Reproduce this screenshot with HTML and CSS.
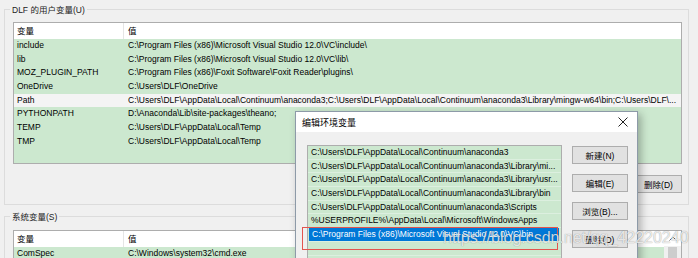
FILE: index.html
```html
<!DOCTYPE html>
<html lang="zh-CN">

<head>
    <meta charset="UTF-8">
    <title>环境变量</title>
    <link rel="stylesheet" href="styles.css">
</head>

<body>
    <div class="env">
        <!-- 用户变量 -->
        <div class="group">
            <div class="group-title">DLF 的用户变量(U)</div>
            <div class="list list-user">
                <div class="list-head">
                    <span>变量</span><span>值</span>
                </div>
                <div class="list-body">
                    <div class="row"><span>include</span><span>C:\Program Files (x86)\Microsoft Visual Studio 12.0\VC\include\</span></div>
                    <div class="row"><span>lib</span><span>C:\Program Files (x86)\Microsoft Visual Studio 12.0\VC\lib\</span></div>
                    <div class="row"><span>MOZ_PLUGIN_PATH</span><span>C:\Program Files (x86)\Foxit Software\Foxit Reader\plugins\</span></div>
                    <div class="row"><span>OneDrive</span><span>C:\Users\DLF\OneDrive</span></div>
                    <div class="row row-current"><span>Path</span><span>C:\Users\DLF\AppData\Local\Continuum\anaconda3;C:\Users\DLF\AppData\Local\Continuum\anaconda3\Library\mingw-w64\bin;C:\Users\DLF\...</span></div>
                    <div class="row"><span>PYTHONPATH</span><span>D:\Anaconda\Lib\site-packages\theano;</span></div>
                    <div class="row"><span>TEMP</span><span>C:\Users\DLF\AppData\Local\Temp</span></div>
                    <div class="row"><span>TMP</span><span>C:\Users\DLF\AppData\Local\Temp</span></div>
                </div>
            </div>
            <!-- 新建/编辑 按钮被对话框遮住 -->
            <div class="actions">
                <button class="btn">删除(D)</button>
            </div>
        </div>

        <!-- 系统变量 -->
        <div class="group group-system">
            <div class="group-title">系统变量(S)</div>
            <div class="list list-system">
                <div class="list-main">
                    <div class="list-head">
                        <span>变量</span><span>值</span>
                    </div>
                    <div class="list-body">
                        <div class="row"><span>ComSpec</span><span>C:\Windows\system32\cmd.exe</span></div>
                    </div>
                </div>
                <div class="scrollbar">
                    <div class="scroll-up">
                        <svg width="8" height="5" viewBox="0 0 8 5"><path d="M0.5 4.5 L4 1 L7.5 4.5" fill="none" stroke="#606060" stroke-width="1"/></svg>
                    </div>
                    <div class="scroll-thumb"></div>
                </div>
            </div>
        </div>

        <!-- 编辑环境变量 对话框 -->
        <div class="dialog">
            <div class="dialog-title">
                <span>编辑环境变量</span>
                <svg class="close" width="10" height="10" viewBox="0 0 10 10"><path d="M0.5 0.5 L9.5 9.5 M9.5 0.5 L0.5 9.5" stroke="#222" stroke-width="1"/></svg>
            </div>
            <div class="dialog-body">
                <div class="path-list">
                    <div class="path-row">C:\Users\DLF\AppData\Local\Continuum\anaconda3</div>
                    <div class="path-row">C:\Users\DLF\AppData\Local\Continuum\anaconda3\Library\mi...</div>
                    <div class="path-row">C:\Users\DLF\AppData\Local\Continuum\anaconda3\Library\usr...</div>
                    <div class="path-row">C:\Users\DLF\AppData\Local\Continuum\anaconda3\Library\bin</div>
                    <div class="path-row">C:\Users\DLF\AppData\Local\Continuum\anaconda3\Scripts</div>
                    <div class="path-row">%USERPROFILE%\AppData\Local\Microsoft\WindowsApps</div>
                    <div class="path-row selected"><span>C:\Program Files (x86)\Microsoft Visual Studio 12.0\VC\bin</span></div>
                    <div class="path-row"></div>
                    <div class="path-row"></div>
                </div>
                <div class="dialog-actions">
                    <button class="btn btn-wide">新建(N)</button>
                    <button class="btn btn-wide">编辑(E)</button>
                    <button class="btn btn-wide">浏览(B)...</button>
                    <button class="btn btn-wide">删除(D)</button>
                </div>
            </div>
        </div>

        <!-- 标注 -->
        <div class="mark"></div>
        <div class="watermark">https://blog.csdn.net/qq_42220240</div>
    </div>
</body>

</html>
```

FILE: styles.css
```css
body {
    margin: 0;
    background-color: #f0f0f0;
    font-family: "Liberation Sans", "Noto Sans CJK SC", sans-serif;
    font-size: 8.5px;
    color: #000;
}

.env {
    position: relative;
    width: 698px;
    height: 258px;
    overflow: hidden;
}

.group {
    margin: 9px 9px 0 4px;
    padding: 0 6px 11px 8px;
    border: 1px solid #dcdcdc;
}

.group-system {
    margin-top: 11px;
    padding-bottom: 0;
    border-bottom: none;
}

.group-title {
    width: fit-content;
    height: 12px;
    line-height: 12px;
    margin: -6px 0 0 -3px;
    padding: 0 2px;
    background-color: #f0f0f0;
    color: #222;
}

.list {
    margin-top: 6px;
    border: 1px solid #adadad;
    background-color: #fff;
}

.list-user {
    height: 140px;
    display: flex;
    flex-direction: column;
}

.list-user .list-body {
    flex: 1;
}

.list-head,
.row {
    display: grid;
    grid-template-columns: 109px 1fr;
    white-space: nowrap;
    overflow: hidden;
}

.list-head {
    height: 16px;
    line-height: 16px;
    background-color: #fff;
}

.list-head span {
    padding-left: 3px;
}

.list-head span + span {
    border-left: 1px solid #e5e5e5;
    padding-left: 4px;
}

.list-body {
    background-color: #cce8cf;
}

.row {
    height: 13.7px;
    line-height: 13.7px;
}

.row span {
    padding-left: 3px;
    overflow: hidden;
}

.row span + span {
    padding-left: 5px;
}

.row-current {
    background-color: #f4f4f4;
}

.actions {
    display: flex;
    justify-content: flex-end;
    gap: 8px;
    margin-top: 11px;
}

.btn {
    height: 18px;
    width: 47px;
    padding: 0;
    font: inherit;
    color: #000;
    background-color: #e1e1e1;
    border: 1px solid #adadad;
}

.list-system {
    margin-top: 7px;
    height: 40px;
    display: flex;
}

.list-main {
    flex: 1;
}

.scrollbar {
    width: 17px;
    background-color: #f0f0f0;
    display: flex;
    flex-direction: column;
    align-items: center;
}

.scroll-up {
    height: 15px;
    width: 17px;
    display: flex;
    align-items: center;
    justify-content: center;
    background-color: #fff;
}

.scroll-thumb {
    width: 9px;
    flex: 1;
    margin-top: 1px;
    background-color: #cdcdcd;
}

/* dialog */
.dialog {
    position: absolute;
    left: 295px;
    top: 111px;
    width: 341px;
    height: 170px;
    border: 1px solid #8d9aa8;
    background-color: #f0f0f0;
    box-shadow: 3px 3px 8px rgba(0, 0, 0, 0.28);
}

.dialog-title {
    height: 20px;
    padding: 0 9px 0 6px;
    display: flex;
    align-items: center;
    justify-content: space-between;
    background-color: #fff;
    font-size: 9px;
}

.dialog-body {
    display: flex;
    gap: 10px;
    padding: 13px 9px 0 11px;
}

.path-list {
    width: 253px;
    height: 140px;
    border: 1px solid #adadad;
    background-color: #cce8cf;
}

.path-row {
    height: 12.7px;
    line-height: 12.7px;
    padding-left: 3px;
    border-bottom: 1px solid #dcefdf;
    white-space: nowrap;
    overflow: hidden;
}

.path-row.selected {
    padding-left: 1px;
}

.path-row.selected span {
    display: block;
    padding-left: 3px;
    margin-right: 2px;
    background-color: #0078d7;
    color: #fff;
}

.dialog-actions {
    display: flex;
    flex-direction: column;
    gap: 10px;
    margin-top: 1px;
}

.btn-wide {
    width: 56px;
}

/* annotations */
.mark {
    position: absolute;
    left: 302px;
    top: 227px;
    width: 254px;
    height: 21px;
    border: 1.5px solid #e3544f;
}

.watermark {
    position: absolute;
    left: 443px;
    top: 229px;
    font-size: 16px;
    white-space: nowrap;
    color: rgba(255, 255, 255, 0.8);
    text-shadow: 0 0 1px rgba(0, 0, 0, 0.45);
}
```
